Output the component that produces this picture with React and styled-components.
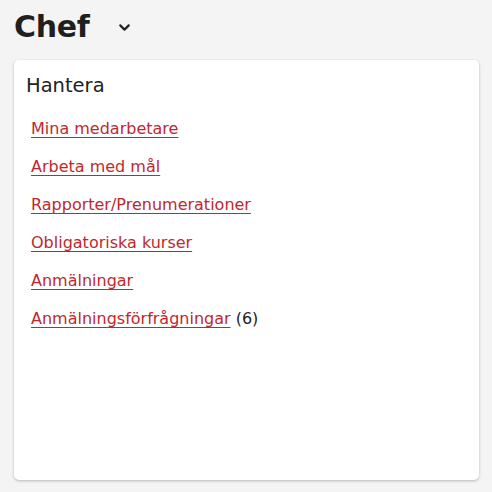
import React from 'react';
import styled, {createGlobalStyle} from 'styled-components';
import {FiChevronDown} from 'react-icons/fi';

const GlobalStyle = createGlobalStyle`
  html, body {
    margin: 0;
    padding: 0;
    background: #f4f4f4;
    font-family: 'DejaVu Sans', 'Noto Sans', sans-serif;
  }
`;

const Page = styled.main`
  padding: 4px 13px 12px 14px;
  box-sizing: border-box;
  width: 492px;
  height: 492px;
  display: flex;
  flex-direction: column;
`;

const Header = styled.div`
  display: flex;
  align-items: center;
  height: 44px;
  margin-bottom: 12px;
`;

const Title = styled.h1`
  margin: 0;
  font-size: 30px;
  font-weight: 700;
  color: #1f1f1f;
  letter-spacing: -0.3px;
`;

const Chevron = styled.span`
  display: flex;
  margin-left: 26px;
  margin-top: 2px;
  svg {
    font-size: 17px;
    color: #222;
    stroke-width: 3;
  }
`;

const Card = styled.section`
  flex: 1;
  background: #fff;
  border-radius: 5px;
  box-shadow: 0 1px 3px rgba(0, 0, 0, 0.25);
  padding: 14px 12px;
`;

const CardTitle = styled.h2`
  margin: 0 0 21px;
  font-size: 19.5px;
  font-weight: 400;
  color: #222;
`;

const LinkList = styled.ul`
  list-style: none;
  margin: 0;
  padding: 0 0 0 5px;
  display: flex;
  flex-direction: column;
  gap: 17px;
`;

const Item = styled.li`
  font-size: 16px;
  line-height: 21px;
  font-weight: 400;
  color: #222;
`;

const Link = styled.a`
  color: #c0282d;
  text-decoration: underline;
  text-decoration-thickness: 1px;
  text-underline-offset: 3px;
`;

const Count = styled.span`
  font-weight: 400;
`;

const links = [
  {label: 'Mina medarbetare'},
  {label: 'Arbeta med mål'},
  {label: 'Rapporter/Prenumerationer'},
  {label: 'Obligatoriska kurser'},
  {label: 'Anmälningar'},
  {label: 'Anmälningsförfrågningar', count: 6},
];

export default function App() {
  return (
    <Page>
      <GlobalStyle />
      <Header>
        <Title>Chef</Title>
        <Chevron>
          <FiChevronDown />
        </Chevron>
      </Header>
      <Card>
        <CardTitle>Hantera</CardTitle>
        <LinkList>
          {links.map((link, idx) => (
            <Item key={idx}>
              <Link href="#">{link.label}</Link>
              {link.count != null && <Count> ({link.count})</Count>}
            </Item>
          ))}
        </LinkList>
      </Card>
    </Page>
  );
}
